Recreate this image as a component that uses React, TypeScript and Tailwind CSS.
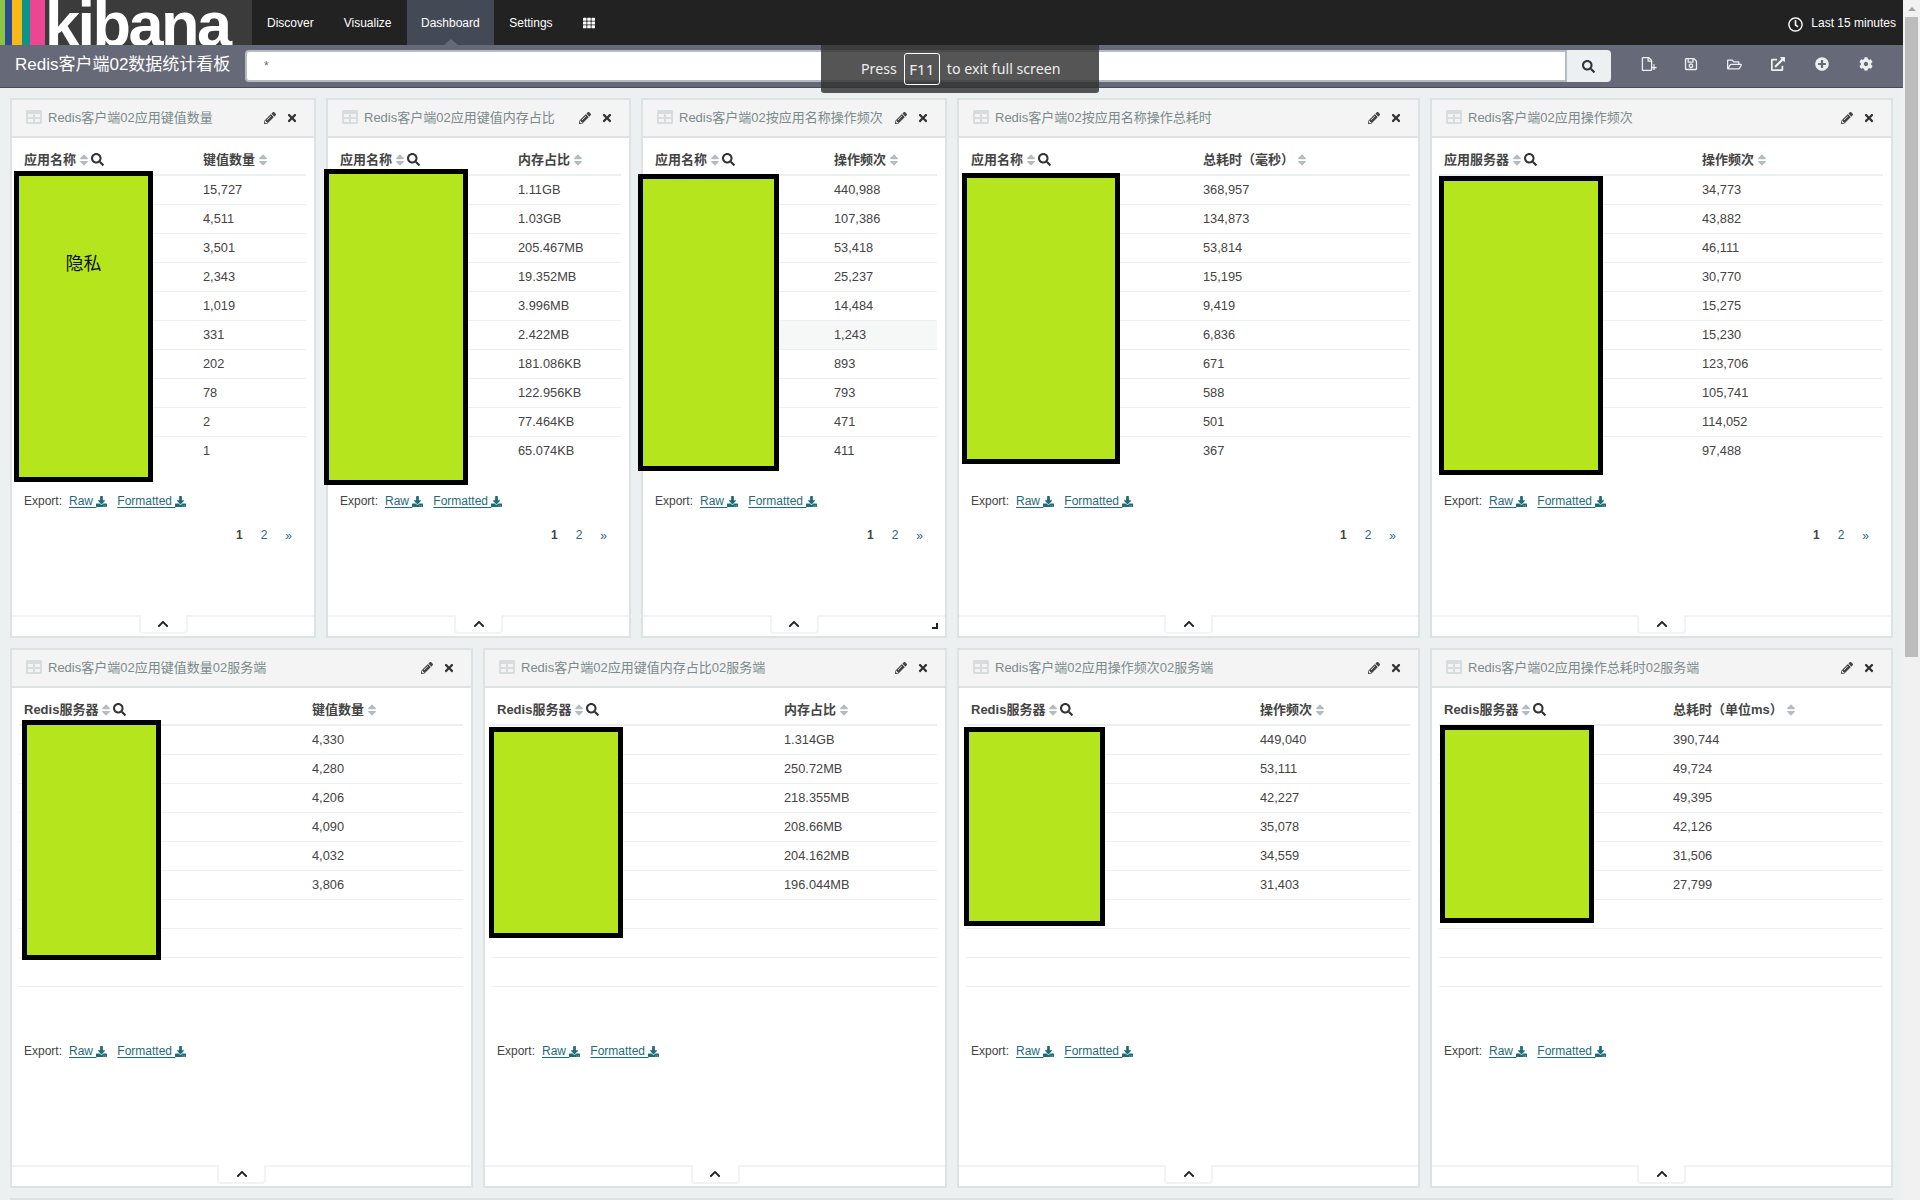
import {
  FaChevronUp,
  FaCog,
  FaDownload,
  FaExternalLinkAlt,
  FaPencilAlt,
  FaPlusCircle,
  FaRegClock,
  FaRegFile,
  FaRegFolderOpen,
  FaRegSave,
  FaSearch,
  FaSort,
  FaTable,
  FaTh,
  FaTimes,
} from "react-icons/fa";

type PanelData = {
  title: string;
  width: string;
  col1: string;
  col2: string;
  col1Width: string;
  rows: string[];
  cover: string;
  paged?: boolean;
  coverText?: string;
  hoverRow?: number;
  resizable?: boolean;
};

const topPanels: PanelData[] = [
  {
    title: "Redis客户端02应用键值数量",
    width: "w-[306px]",
    col1: "应用名称",
    col2: "键值数量",
    col1Width: "w-[184px]",
    rows: ["15,727", "4,511", "3,501", "2,343", "1,019", "331", "202", "78", "2", "1"],
    cover: "left-[2px] top-[71px] w-[139px] h-[311px]",
    coverText: "隐私",
    paged: true,
  },
  {
    title: "Redis客户端02应用键值内存占比",
    width: "w-[305px]",
    col1: "应用名称",
    col2: "内存占比",
    col1Width: "w-[183px]",
    rows: ["1.11GB", "1.03GB", "205.467MB", "19.352MB", "3.996MB", "2.422MB", "181.086KB", "122.956KB", "77.464KB", "65.074KB"],
    cover: "-left-[4px] top-[69px] w-[144px] h-[316px]",
    paged: true,
  },
  {
    title: "Redis客户端02按应用名称操作频次",
    width: "w-[306px]",
    col1: "应用名称",
    col2: "操作频次",
    col1Width: "w-[184px]",
    rows: ["440,988", "107,386", "53,418", "25,237", "14,484", "1,243", "893", "793", "471", "411"],
    cover: "-left-[5px] top-[74px] w-[141px] h-[297px]",
    paged: true,
    hoverRow: 5,
    resizable: true,
  },
  {
    title: "Redis客户端02按应用名称操作总耗时",
    width: "w-[463px]",
    col1: "应用名称",
    col2: "总耗时（毫秒）",
    col1Width: "w-[237px]",
    rows: ["368,957", "134,873", "53,814", "15,195", "9,419", "6,836", "671", "588", "501", "367"],
    cover: "left-[3px] top-[73px] w-[158px] h-[291px]",
    paged: true,
  },
  {
    title: "Redis客户端02应用操作频次",
    width: "w-[463px]",
    col1: "应用服务器",
    col2: "操作频次",
    col1Width: "w-[263px]",
    rows: ["34,773", "43,882", "46,111", "30,770", "15,275", "15,230", "123,706", "105,741", "114,052", "97,488"],
    cover: "left-[7px] top-[76px] w-[164px] h-[299px]",
    paged: true,
  },
];

const bottomPanels: PanelData[] = [
  {
    title: "Redis客户端02应用键值数量02服务端",
    width: "w-[463px]",
    col1: "Redis服务器",
    col2: "键值数量",
    col1Width: "w-[293px]",
    rows: ["4,330", "4,280", "4,206", "4,090", "4,032", "3,806", "", "", "", ""],
    cover: "left-[10px] top-[70px] w-[139px] h-[240px]",
  },
  {
    title: "Redis客户端02应用键值内存占比02服务端",
    width: "w-[464px]",
    col1: "Redis服务器",
    col2: "内存占比",
    col1Width: "w-[292px]",
    rows: ["1.314GB", "250.72MB", "218.355MB", "208.66MB", "204.162MB", "196.044MB", "", "", "", ""],
    cover: "left-[4px] top-[77px] w-[134px] h-[211px]",
  },
  {
    title: "Redis客户端02应用操作频次02服务端",
    width: "w-[463px]",
    col1: "Redis服务器",
    col2: "操作频次",
    col1Width: "w-[294px]",
    rows: ["449,040", "53,111", "42,227", "35,078", "34,559", "31,403", "", "", "", ""],
    cover: "left-[5px] top-[77px] w-[141px] h-[199px]",
  },
  {
    title: "Redis客户端02应用操作总耗时02服务端",
    width: "w-[463px]",
    col1: "Redis服务器",
    col2: "总耗时（单位ms）",
    col1Width: "w-[234px]",
    rows: ["390,744", "49,724", "49,395", "42,126", "31,506", "27,799", "", "", "", ""],
    cover: "left-[8px] top-[75px] w-[154px] h-[198px]",
  },
];

const Panel = ({ panel }: { panel: PanelData }) => (
  <div className={`relative flex h-[540px] flex-col border-2 border-[#dfe2e3] bg-white ${panel.width}`}>
    <div className="flex h-[38px] flex-none items-center border-b-2 border-[#dfe2e3] bg-[#f4f4f4] pl-[14px] pr-[16px]">
      <FaTable size={16} className="mb-[3px] mr-[6px] flex-none text-[#d9dcdd]" />
      <span className="flex-1 text-[13px] text-[#7b8a8b]">{panel.title}</span>
      <FaPencilAlt size={12} className="mr-[10px] text-[#444]" />
      <FaTimes size={12} className="text-[#333]" />
    </div>

    <div className="pl-[7px] pr-[8px]">
      <div className="mt-[7px] flex h-[31px] items-center border-b-2 border-[#ecf0f1] text-[13px] font-bold text-[#444]">
        <div className={`flex flex-none items-center pl-[5px] ${panel.col1Width}`}>
          <span>{panel.col1}</span>
          <FaSort size={14} className="ml-[1px] text-[#b4bcc2]" />
          <FaSearch size={13} className="text-[#333]" />
        </div>
        <div className="flex items-center">
          <span>{panel.col2}</span>
          <FaSort size={14} className="ml-[1px] text-[#b4bcc2]" />
        </div>
      </div>
      {panel.rows.map((value, i) => (
        <div
          key={i}
          className={`flex h-[29px] items-center border-b border-[#ecf0f1] pb-[1px] text-[12.8px] text-[#444] last:border-b-0 ${panel.hoverRow === i ? "bg-[#f6f8f8]" : ""}`}
        >
          <div className={`flex-none ${panel.col1Width}`} />
          <div>{value}</div>
        </div>
      ))}
    </div>

    <div className="mt-[27px] flex h-[16px] items-center pl-[12px] text-[12px] text-[#444]">
      <span className="mr-[7px]">Export:</span>
      <a className="mr-[10px] flex items-center text-[#1f6b7a]">
        <span className="whitespace-pre underline underline-offset-2">Raw </span>
        <FaDownload size={11} />
      </a>
      <a className="flex items-center text-[#1f6b7a]">
        <span className="whitespace-pre underline underline-offset-2">Formatted </span>
        <FaDownload size={11} />
      </a>
    </div>

    {panel.paged && (
      <div className="mt-[18px] flex h-[16px] items-center justify-end gap-[18px] pr-[22px] text-[12px]">
        <span className="font-bold text-[#444]">1</span>
        <span className="text-[#1f6b7a]">2</span>
        <span className="mt-[2px] text-[#1f6b7a]">»</span>
      </div>
    )}

    <div className="mt-auto flex h-[21px] flex-none justify-center border-t-2 border-[#f1f3f4]">
      <div className="-mt-[2px] flex h-[19px] w-[49px] items-center justify-center rounded-b-[4px] border-x-2 border-b-2 border-[#f1f3f4] bg-white">
        <FaChevronUp size={12} className="text-[#222]" />
      </div>
    </div>

    {panel.resizable && (
      <div className="absolute bottom-[7px] right-[7px] h-[6px] w-[6px] border-b-2 border-r-2 border-[#222]" />
    )}

    <div className={`absolute z-10 border-[5px] border-black bg-[#b5e61d] ${panel.cover}`}>
      {panel.coverText && (
        <div className="pt-[75px] text-center text-[18px] text-[#111]">{panel.coverText}</div>
      )}
    </div>
  </div>
);

const App = () => {
  const toolbarIcons = [
    <span key="new" className="relative block">
      <FaRegFile size={14} />
      <span className="absolute -bottom-[2px] -right-[3px] text-[10px] font-bold leading-none">+</span>
    </span>,
    <FaRegSave key="save" size={14} />,
    <FaRegFolderOpen key="open" size={15} />,
    <FaExternalLinkAlt key="share" size={14} />,
    <FaPlusCircle key="add" size={14} />,
    <FaCog key="options" size={14} />,
  ];

  return (
    <div className="relative flex h-[1200px] w-[1920px] overflow-hidden bg-white font-['Liberation_Sans','Noto_Sans_CJK_SC',sans-serif]">
      <div className="flex w-[1903px] flex-none flex-col bg-[#ecf0f1]">
        <nav className="flex h-[45px] flex-none bg-[#222222] text-[12px] text-white">
          <div className="flex w-[252px] flex-none overflow-hidden bg-[#3b3b3b]">
            <div className="h-full w-[5px] bg-[#8cc63f]" />
            <div className="h-full w-[7px] bg-[#2b4a94]" />
            <div className="h-full w-[10px] bg-[#f6b918]" />
            <div className="h-full w-[8px] bg-[#0d9488]" />
            <div className="h-full w-[15px] bg-[#ec4592]" />
            <div className="-mt-[7px] h-[52px] text-[63px] font-bold leading-[63px] tracking-[-2.5px] text-white">kibana</div>
          </div>
          <a className="flex items-center px-[15px]">Discover</a>
          <a className="flex items-center px-[15px]">Visualize</a>
          <a className="relative flex items-center bg-[#444a55] px-[14.5px]">
            Dashboard
            <span className="absolute bottom-0 left-[37px] h-0 w-0 border-x-[7px] border-b-[6px] border-x-transparent border-b-[#666977]" />
          </a>
          <a className="flex items-center px-[15px]">Settings</a>
          <a className="flex items-center px-[15px]">
            <FaTh size={12} />
          </a>
          <div className="ml-auto flex items-center pr-[7px]">
            <FaRegClock size={15} className="mr-[8px] mt-[3px]" />
            Last 15 minutes
          </div>
        </nav>

        <div className="flex h-[43px] flex-none border-b border-[#4a4c55] bg-[#666977] pt-[5px]">
          <div className="w-[245px] flex-none pl-[15px] pt-[3px] text-[17px] leading-[24px] text-white">
            Redis客户端02数据统计看板
          </div>
          <div className="flex h-[32px] w-[1322px] flex-none items-center rounded-l-[4px] border-2 border-[#b4bcc2] bg-white pl-[17px] text-[12px] text-[#666]">
            *
          </div>
          <div className="flex h-[32px] w-[44px] flex-none items-center justify-center rounded-r-[4px] bg-[#ecf0f1] pr-[2px]">
            <FaSearch size={13} className="text-[#333]" />
          </div>
          <div className="ml-[14px] flex h-[28px] items-center text-[#ecf0f1]">
            {toolbarIcons.map((icon, i) => (
              <div key={i} className="flex w-[43.8px] justify-center">
                {icon}
              </div>
            ))}
          </div>
        </div>

        <div className="mt-[10px] flex gap-[10px] pl-[10px]">
          {topPanels.map((panel) => (
            <Panel key={panel.title} panel={panel} />
          ))}
        </div>
        <div className="mt-[10px] flex gap-[10px] pl-[10px]">
          {bottomPanels.map((panel) => (
            <Panel key={panel.title} panel={panel} />
          ))}
        </div>
        <div className="ml-[10px] mt-[10px] h-[2px] w-[1883px] flex-none bg-[#dfe2e3]" />
      </div>

      <div className="flex w-[17px] flex-none flex-col bg-[#f1f1f1] px-[2px]">
        <div className="flex h-[17px] flex-none items-center justify-center">
          <div className="h-0 w-0 border-x-[4px] border-b-[4px] border-x-transparent border-b-[#a3a3a3]" />
        </div>
        <div className="h-[640px] bg-[#bcbcbc]" />
      </div>

      <div className="absolute left-[821px] top-[45px] z-20 flex h-[48px] w-[278px] items-center rounded-b-[3px] bg-[rgba(50,50,50,0.83)] pl-[40px] font-['Noto_Sans',sans-serif] text-[14.2px] text-[#eeeeee]">
        Press
        <span className="mx-[7px] flex h-[32px] w-[36px] items-center justify-center rounded-[3px] border border-white text-[15px]">F11</span>
        to exit full screen
      </div>
    </div>
  );
};

export default App;
